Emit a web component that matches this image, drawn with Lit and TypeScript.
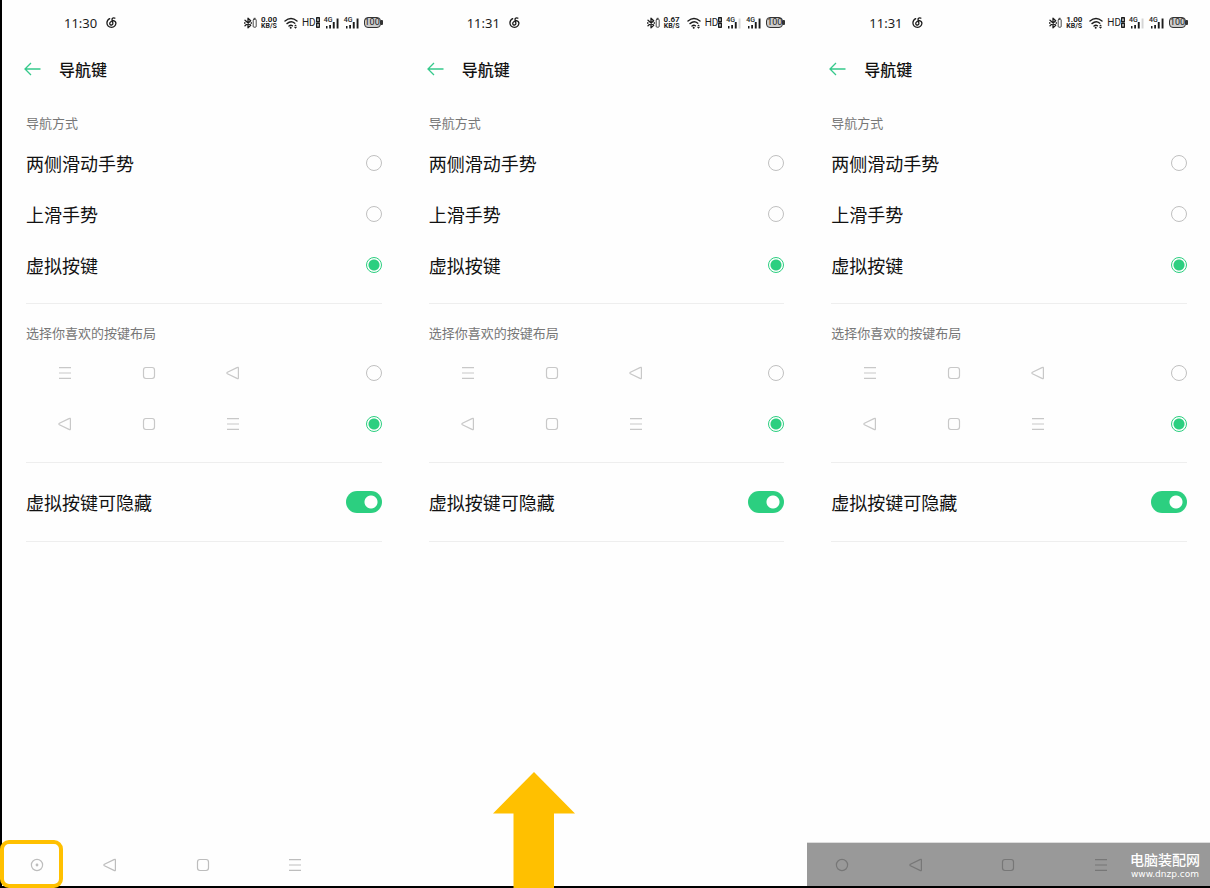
import { LitElement, html, css, svg, nothing } from "lit";
import { customElement, property } from "lit/decorators.js";
import { classMap } from "lit/directives/class-map.js";

type Glyph = "menu" | "home" | "back" | "hide" | "ring";

const shapes = {
  menu: svg`<path d="M1 1.700h12M1 7h12M1 12.300h12" />`,
  home: svg`<rect x="1.500" y="1.500" width="11" height="11" rx="2.400" />`,
  back: svg`<path d="M12.400 1.900v10.200q0 1-.9.5L1.400 7.800q-1-.8 0-1.600L11.500 1.400q.9-.5.9.5z" />`,
  hide: svg`<circle cx="7" cy="7" r="5.600" /><circle class="dot" cx="7" cy="7" r="1.400" />`,
  ring: svg`<circle cx="7" cy="7" r="5.600" />`,
};

const glyph = (name: Glyph) =>
  html`<svg class="glyph" viewBox="0 0 14 14" aria-hidden="true">${shapes[name]}</svg>`;

const glyphNames: Record<Glyph, string> = {
  menu: "菜单",
  home: "主页",
  back: "返回",
  hide: "隐藏",
  ring: "隐藏",
};

@customElement("status-bar")
class StatusBar extends LitElement {
  @property() time = "";
  @property() speed = "";
  @property({ type: Boolean }) weak = false;

  static styles = css`
    :host {
      display: flex;
      align-items: center;
      height: 45px;
      padding: 0 22px 0 62px;
      color: #1c1c1c;
      font-family: "Noto Sans", "Noto Sans CJK SC", sans-serif;
    }
    svg {
      display: block;
      fill: none;
      stroke: currentColor;
      stroke-linecap: round;
      stroke-linejoin: round;
    }
    .solid {
      fill: currentColor;
      stroke: none;
    }
    .faint {
      fill: #d5d5d5;
      stroke: none;
    }
    .time {
      font-size: 13px;
      line-height: 20px;
    }
    .music {
      width: 11px;
      height: 11px;
      margin-left: 9px;
    }
    .icons {
      display: flex;
      align-items: center;
      margin-left: auto;
    }
    .bluetooth {
      width: 13px;
      height: 12px;
    }
    .speed {
      width: 20px;
      margin: 0 5px 0 2px;
      font-family: Roboto, sans-serif;
      font-size: 8px;
      font-weight: 700;
      line-height: 7px;
      text-align: center;
    }
    .unit {
      display: block;
      font-size: 7px;
    }
    .wifi {
      width: 14px;
      height: 12px;
    }
    .hd {
      margin-left: 4px;
      font-family: Roboto, sans-serif;
      font-size: 10px;
      line-height: 12px;
    }
    .sims {
      width: 4px;
      height: 11px;
    }
    .signal {
      position: relative;
      width: 16px;
      height: 12px;
      margin-left: 4px;
    }
    .net {
      position: absolute;
      top: 0;
      left: 0;
      font-family: Roboto, sans-serif;
      font-size: 7px;
      font-weight: 500;
      line-height: 6px;
    }
    .battery {
      position: relative;
      margin: 0 2px 0 4px;
      width: 17px;
      height: 11px;
      box-sizing: border-box;
      border: 1px solid #333;
      border-radius: 4px;
      background: #ccc;
      font-family: Roboto, sans-serif;
      font-size: 9px;
      line-height: 9px;
      display: flex;
      justify-content: center;
    }
    .battery::after {
      content: "";
      position: absolute;
      right: -3px;
      top: 2px;
      width: 2px;
      height: 5px;
      background: #333;
      border-radius: 0 1px 1px 0;
    }
  `;

  private signal(weak: boolean) {
    return html`<span class="signal">
      <span class="net">4G</span>
      <svg width="16" height="12" viewBox="0 0 16 12" aria-hidden="true">
        <path class="solid" d="M2 9h1.500v2.500H2zM5.200 8h1.800v3.500H5.200zM8.800 5h1.900v6.500H8.800z" />
        <path class=${weak ? "faint" : "solid"} d="M12.600 1.500h1.900v10h-1.900z" />
      </svg>
    </span>`;
  }

  render() {
    return html`
      <span class="time">${this.time}</span>
      <svg class="music" viewBox="0 0 11 11" stroke-width="1.300" aria-hidden="true">
        <path d="M8.800 1.200Q6.400.400 6 2.100L6.900 6.300A1.600 1.600 0 1 1 4.600 5Q5.600 3.700 7.400 3.700 10 4.300 9.900 6.500 9.400 10 5.600 10.300 1.200 10.100.900 6 1 3 3.700 1.700" />
      </svg>
      <div class="icons">
        <svg class="bluetooth" viewBox="0 0 13 12" aria-hidden="true">
          <path stroke-width="1.300" d="M1 3.200 6.700 8.300 4 10.800V1.200L6.700 3.700 1 8.800" />
          <path class="solid" d="M0 5.300h1.500v1.500H0zM6.600 5.300H8v1.500H6.600z" />
          <rect x="9.200" y="2.200" width="3" height="8" rx=".8" stroke-width=".8" />
          <path stroke-width=".8" d="M10.200 1.300h1" />
        </svg>
        <span class="speed">${this.speed}<span class="unit">KB/S</span></span>
        <svg class="wifi" viewBox="0 0 14 12" stroke-width="1.400" aria-hidden="true">
          <path d="M1 4Q7-1 13 4M3 6.600Q7 3.300 10.800 6.200M5 9Q6.800 7.600 8.400 8.800" />
          <circle class="solid" cx="6.700" cy="10.700" r="1" />
          <path class="solid" d="M10 9.200 11.500 7.400 13 9.200zM10 10l1.500 1.800L13 10z" />
        </svg>
        <span class="hd">HD</span>
        <svg class="sims" viewBox="0 0 4 11" stroke-width="1.400" aria-hidden="true">
          <rect x=".7" y=".8" width="2.600" height="4" />
          <rect x=".7" y="6.200" width="2.600" height="4" />
        </svg>
        ${this.signal(this.weak)} ${this.signal(false)}
        <span class="battery">100</span>
      </div>
    `;
  }
}

@customElement("phone-screen")
class PhoneScreen extends LitElement {
  @property() time = "";
  @property() speed = "";
  @property({ type: Boolean }) weak = false;
  @property() nav: "light" | "dark" | "none" = "none";

  static styles = css`
    :host {
      position: relative;
      display: flex;
      flex-direction: column;
      min-width: 0;
      color: #111;
      background: #fefefe;
    }
    .header {
      display: flex;
      align-items: center;
      gap: 18px;
      height: 48px;
      padding: 0 22px;
    }
    button {
      display: flex;
      align-items: center;
      justify-content: center;
      padding: 0;
      border: 0;
      background: none;
      color: inherit;
    }
    .return {
      width: 17px;
      height: 24px;
      color: #35c98b;
    }
    .return svg {
      width: 17px;
      height: 14px;
      fill: none;
      stroke: currentColor;
      stroke-width: 1.300;
    }
    h1 {
      margin: 0;
      font-size: 16px;
      font-weight: 500;
      line-height: 22px;
    }
    .settings {
      flex: 1;
      padding: 20px 23px 0 24px;
    }
    fieldset {
      min-width: 0;
      margin: 0;
      padding: 0 0 13px;
      border: 0;
      border-bottom: 1px solid #eee;
    }
    fieldset + fieldset {
      padding-top: 19px;
    }
    legend {
      float: left;
      width: 100%;
      padding: 0;
      margin-bottom: 4px;
      color: #777;
      font-size: 13px;
      line-height: 20px;
    }
    .row {
      clear: both;
      display: flex;
      align-items: center;
      justify-content: space-between;
      height: 51px;
      font-size: 18px;
      line-height: 26px;
    }
    .row.switch {
      height: 78px;
      border-bottom: 1px solid #eee;
    }
    .order {
      display: flex;
      gap: 70px;
      padding-left: 32px;
      color: #c8c8c8;
    }
    .glyph {
      display: block;
      width: 14px;
      height: 14px;
      fill: none;
      stroke: currentColor;
      stroke-width: 1.200;
      stroke-linejoin: round;
    }
    .dot {
      fill: currentColor;
      stroke: none;
    }
    input {
      appearance: none;
      flex: none;
      margin: 0;
    }
    input[type="radio"] {
      width: 16px;
      height: 16px;
      border: 1px solid #c0c0c0;
      border-radius: 50%;
    }
    input[type="radio"]:checked {
      border-color: #2ccf80;
      background: radial-gradient(circle, #2ccf80 5px, transparent 6px);
    }
    input[type="checkbox"] {
      width: 36px;
      height: 22px;
      border-radius: 11px;
      background: radial-gradient(circle at 25px 11px, #fff 6px, #2ccf80 7px);
    }
    .nav {
      display: grid;
      grid-template-columns: 54px repeat(3, 1fr);
      height: 43px;
      padding: 0 63px 0 8px;
      color: #bdbdbd;
    }
    .nav.dark {
      color: #777;
      background: #999;
      box-shadow: 0 -1px #ddd;
    }
  `;

  private choice(group: string, content: unknown, checked: boolean) {
    return html`<label class="row">
      ${content}
      <input type="radio" name=${group} .checked=${checked} />
    </label>`;
  }

  private order(names: Glyph[]) {
    return html`<span class="order" role="img" aria-label=${names.map((n) => glyphNames[n]).join(" ")}>
      ${names.map(glyph)}
    </span>`;
  }

  render() {
    const keys: Glyph[] = [this.nav === "dark" ? "ring" : "hide", "back", "home", "menu"];
    return html`
      <status-bar .time=${this.time} .speed=${this.speed} .weak=${this.weak}></status-bar>
      <header class="header">
        <button class="return" aria-label="返回">
          <svg viewBox="0 0 17 14" aria-hidden="true"><path d="M16.500 7H1.200M7 1 1 7l6 6" /></svg>
        </button>
        <h1>导航键</h1>
      </header>
      <main class="settings">
        <fieldset>
          <legend>导航方式</legend>
          ${this.choice("mode", html`<span>两侧滑动手势</span>`, false)}
          ${this.choice("mode", html`<span>上滑手势</span>`, false)}
          ${this.choice("mode", html`<span>虚拟按键</span>`, true)}
        </fieldset>
        <fieldset>
          <legend>选择你喜欢的按键布局</legend>
          ${this.choice("layout", this.order(["menu", "home", "back"]), false)}
          ${this.choice("layout", this.order(["back", "home", "menu"]), true)}
        </fieldset>
        <label class="row switch">
          <span>虚拟按键可隐藏</span>
          <input type="checkbox" role="switch" checked />
        </label>
      </main>
      ${this.nav === "none"
        ? nothing
        : html`<nav class=${classMap({ nav: true, dark: this.nav === "dark" })}>
            ${keys.map((k) => html`<button aria-label=${glyphNames[k]}>${glyph(k)}</button>`)}
          </nav>`}
      <slot></slot>
    `;
  }
}

@customElement("app-root")
class AppRoot extends LitElement {
  static styles = css`
    :host {
      display: grid;
      grid-template-columns: repeat(3, 1fr);
      box-sizing: border-box;
      min-height: 100vh;
      border: solid #000;
      border-width: 0 0 2px 2px;
      font-family: "Noto Sans CJK SC", sans-serif;
    }
    .highlight {
      position: absolute;
      left: -2px;
      bottom: -2px;
      box-sizing: border-box;
      width: 63px;
      height: 48px;
      border: 4px solid #ffc000;
      border-radius: 9px;
      pointer-events: none;
    }
    .swipe {
      position: absolute;
      left: 88px;
      bottom: -2px;
      width: 82px;
      height: 116px;
      fill: #ffc000;
    }
    .watermark {
      position: absolute;
      right: 10px;
      bottom: 5px;
      color: #fff;
      font-size: 14px;
      font-weight: 500;
      line-height: 16px;
      text-align: center;
    }
    .site {
      display: block;
      font-family: "DejaVu Sans", sans-serif;
      font-size: 9px;
      font-weight: 400;
      line-height: 14px;
    }
  `;

  render() {
    return html`
      <phone-screen time="11:30" speed="0.00" nav="light">
        <div class="highlight"></div>
      </phone-screen>
      <phone-screen time="11:31" speed="0.67" weak>
        <svg class="swipe" viewBox="0 0 82 116" aria-hidden="true">
          <path d="M41 0 82 41.500H61V116H20.500V41.500H0z" />
        </svg>
      </phone-screen>
      <phone-screen time="11:31" speed="1.00" weak nav="dark">
        <div class="watermark">电脑装配网<span class="site">www.dnzp.com</span></div>
      </phone-screen>
    `;
  }
}
